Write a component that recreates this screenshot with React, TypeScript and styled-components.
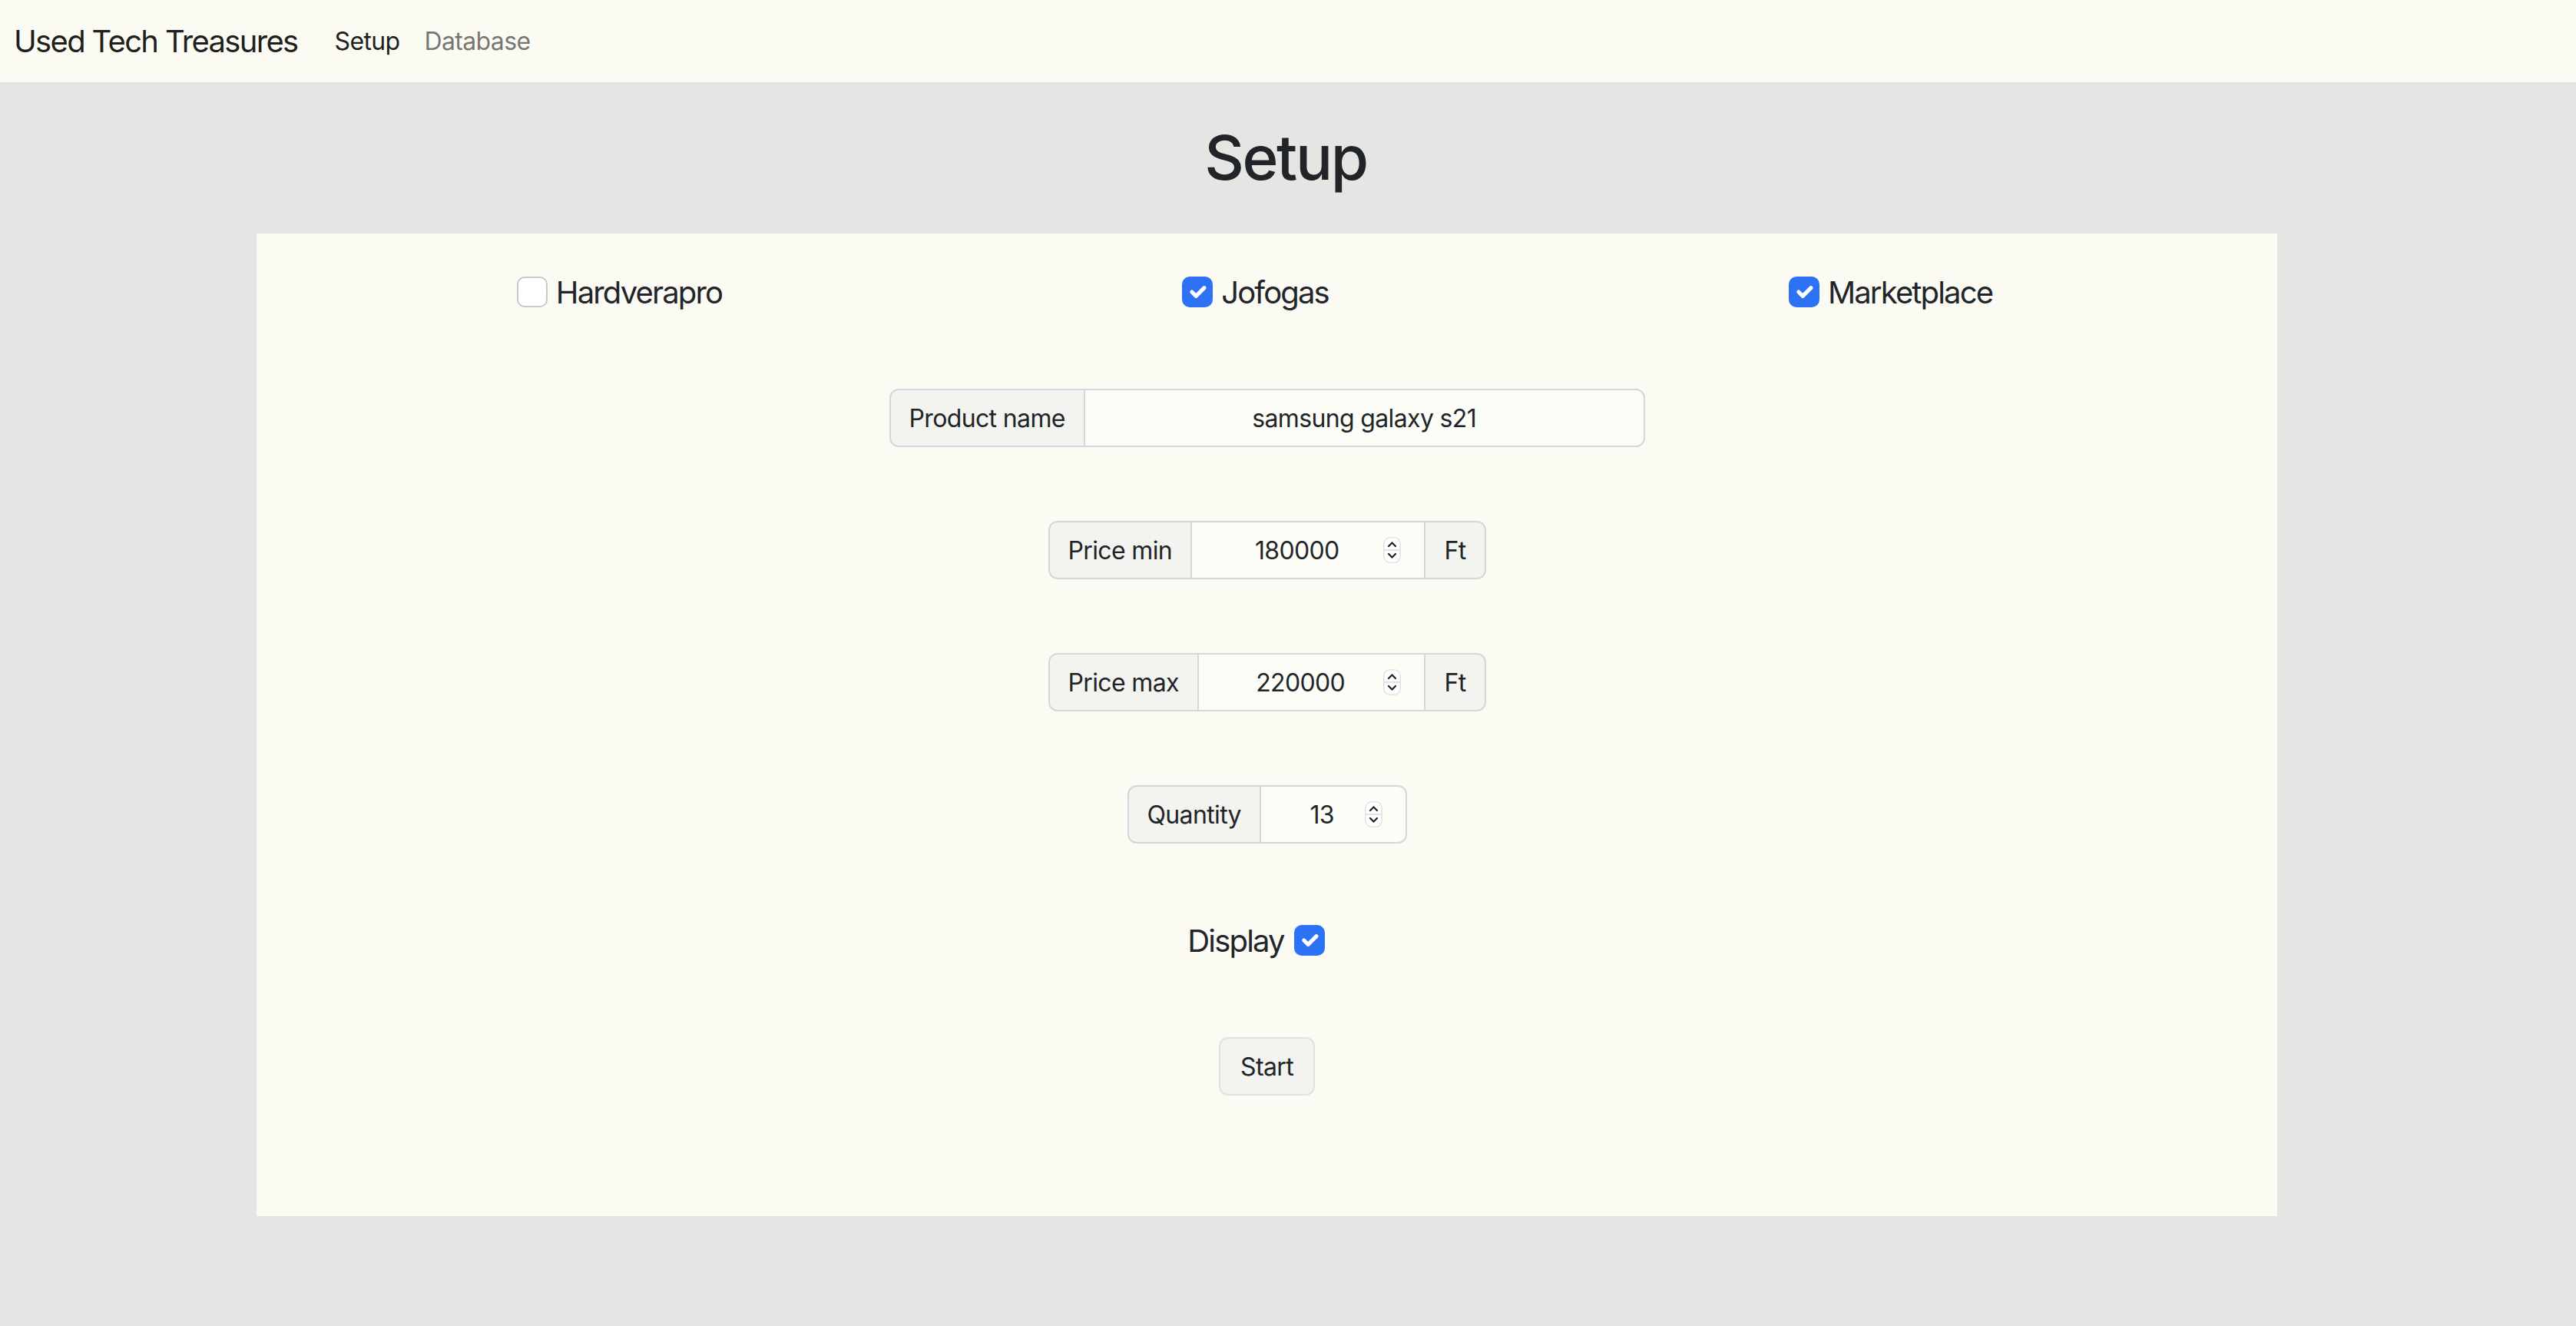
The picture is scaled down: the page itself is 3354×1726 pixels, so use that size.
import styled, { createGlobalStyle } from "styled-components";

const GlobalStyle = createGlobalStyle`
  body {
    margin: 0;
    background: #e5e5e3;
    font-family: Inter, "Noto Sans", sans-serif;
    color: #212529;
  }
  * { box-sizing: border-box; }
`;

const Navbar = styled.nav`
  display: flex;
  align-items: center;
  height: 107px;
  padding-left: 18px;
  background: #fbfbf4;
`;

const Brand = styled.span`
  font-size: 40px;
  color: rgba(0, 0, 0, 0.9);
  margin-right: 32px;
  letter-spacing: -0.042em;
`;

const NavLink = styled.a<{ $active?: boolean }>`
  font-size: 32px;
  padding: 0 16px;
  letter-spacing: -0.02em;
  color: ${(p) => (p.$active ? "rgba(0,0,0,0.9)" : "rgba(0,0,0,0.55)")};
  text-decoration: none;
`;

const Heading = styled.h1`
  margin: 50px 0 49px;
  font-size: 80px;
  font-weight: 500;
  line-height: 96px;
  text-align: center;
  letter-spacing: -0.03em;
  padding-right: 6px;
`;

const Card = styled.div`
  margin-left: 332px;
  width: 2635px;
  background: #fbfbf4;
  border: 2px solid #e2e3e6;
  padding: 46px 0 157px;
  display: flex;
  flex-direction: column;
  align-items: center;
  gap: 96px;
`;

const CheckRow = styled.div`
  display: flex;
  gap: 599px;
  margin-right: 32px;
`;

const CheckItem = styled.label<{ $shift?: number; $gap?: number }>`
  display: flex;
  align-items: center;
  gap: ${(p) => p.$gap ?? 11}px;
  height: 60px;
  font-size: 40px;
  letter-spacing: -0.046em;
  margin-right: ${(p) => p.$shift ?? 0}px;
  white-space: nowrap;
`;

const Box = styled.span<{ $checked: boolean }>`
  flex: none;
  width: 40px;
  height: 40px;
  border-radius: 10px;
  display: flex;
  align-items: center;
  justify-content: center;
  background: ${(p) => (p.$checked ? "#2d72f5" : "#ffffff")};
  border: 2px solid ${(p) => (p.$checked ? "#2d72f5" : "#c9c9c9")};
`;

const Group = styled.div<{ $width: number }>`
  display: flex;
  width: ${(p) => p.$width}px;
  height: 76px;
  font-size: 32px;
  letter-spacing: -0.02em;
`;

const Addon = styled.span<{ $side: "left" | "right" }>`
  flex: none;
  display: flex;
  align-items: center;
  white-space: nowrap;
  padding: 0 24px;
  background: #f3f3ef;
  border: 2px solid #d3d7dc;
  ${(p) =>
    p.$side === "left"
      ? "border-radius: 12px 0 0 12px;"
      : "border-radius: 0 12px 12px 0; border-left: none;"}
`;

const Field = styled.div<{ $last?: boolean }>`
  flex: 1;
  min-width: 0;
  display: flex;
  align-items: center;
  padding: 0 24px;
  background: #fdfdf8;
  border: 2px solid #d3d7dc;
  border-left: none;
  ${(p) => (p.$last ? "border-radius: 0 12px 12px 0;" : "")}
`;

const TextInput = styled.input`
  flex: 1;
  width: 0;
  min-width: 0;
  border: none;
  background: transparent;
  font: inherit;
  letter-spacing: inherit;
  color: #212529;
  text-align: center;
  padding: 0;
  outline: none;
`;

const SpinnerSvg = styled.svg`
  flex: none;
  margin-right: 6px;
`;

const Button = styled.button`
  height: 76px;
  padding: 0 26px;
  background: #f3f3ef;
  border: 2px solid #dfe1e6;
  border-radius: 12px;
  font-family: inherit;
  font-size: 32px;
  letter-spacing: -0.02em;
  color: #212529;
`;

const Check = ({ checked }: { checked: boolean }) => (
  <Box $checked={checked}>
    {checked && (
      <svg width="36" height="36" viewBox="0 0 20 20">
        <path
          d="m6 10 3 3 6-6"
          fill="none"
          stroke="#fff"
          strokeWidth="2.8"
          strokeLinecap="round"
          strokeLinejoin="round"
        />
      </svg>
    )}
  </Box>
);

const Spinner = () => (
  <SpinnerSvg width="23" height="34" viewBox="0 0 23 34">
    <rect x="0.75" y="0.75" width="21.5" height="32.5" rx="8" fill="#fff" stroke="#e2e2e2" strokeWidth="1.5" />
    <line x1="1" y1="17" x2="22" y2="17" stroke="#e4e4e4" strokeWidth="2" />
    <path d="M7 12 11.5 7.5 16 12" fill="none" stroke="#222" strokeWidth="2.2" strokeLinecap="round" strokeLinejoin="round" />
    <path d="M7 22 11.5 26.5 16 22" fill="none" stroke="#222" strokeWidth="2.2" strokeLinecap="round" strokeLinejoin="round" />
  </SpinnerSvg>
);

const sources = [
  { name: "Hardverapro", checked: false },
  { name: "Jofogas", checked: true },
  { name: "Marketplace", checked: true },
];

export default function App() {
  return (
    <>
      <GlobalStyle />
      <Navbar>
        <Brand>Used Tech Treasures</Brand>
        <NavLink $active href="#">Setup</NavLink>
        <NavLink href="#">Database</NavLink>
      </Navbar>
      <Heading>Setup</Heading>
      <Card>
        <CheckRow>
          {sources.map((s) => (
            <CheckItem key={s.name}>
              <Check checked={s.checked} />
              {s.name}
            </CheckItem>
          ))}
        </CheckRow>

        <Group $width={984}>
          <Addon $side="left">Product name</Addon>
          <Field $last>
            <TextInput readOnly value="samsung galaxy s21" />
          </Field>
        </Group>

        <Group $width={570}>
          <Addon $side="left">Price min</Addon>
          <Field>
            <TextInput readOnly value="180000" />
            <Spinner />
          </Field>
          <Addon $side="right">Ft</Addon>
        </Group>

        <Group $width={570}>
          <Addon $side="left">Price max</Addon>
          <Field>
            <TextInput readOnly value="220000" />
            <Spinner />
          </Field>
          <Addon $side="right">Ft</Addon>
        </Group>

        <Group $width={364}>
          <Addon $side="left">Quantity</Addon>
          <Field $last>
            <TextInput readOnly value="13" />
            <Spinner />
          </Field>
        </Group>

        <CheckItem $shift={28} $gap={13}>
          Display
          <Check checked />
        </CheckItem>

        <Button>Start</Button>
      </Card>
    </>
  );
}
